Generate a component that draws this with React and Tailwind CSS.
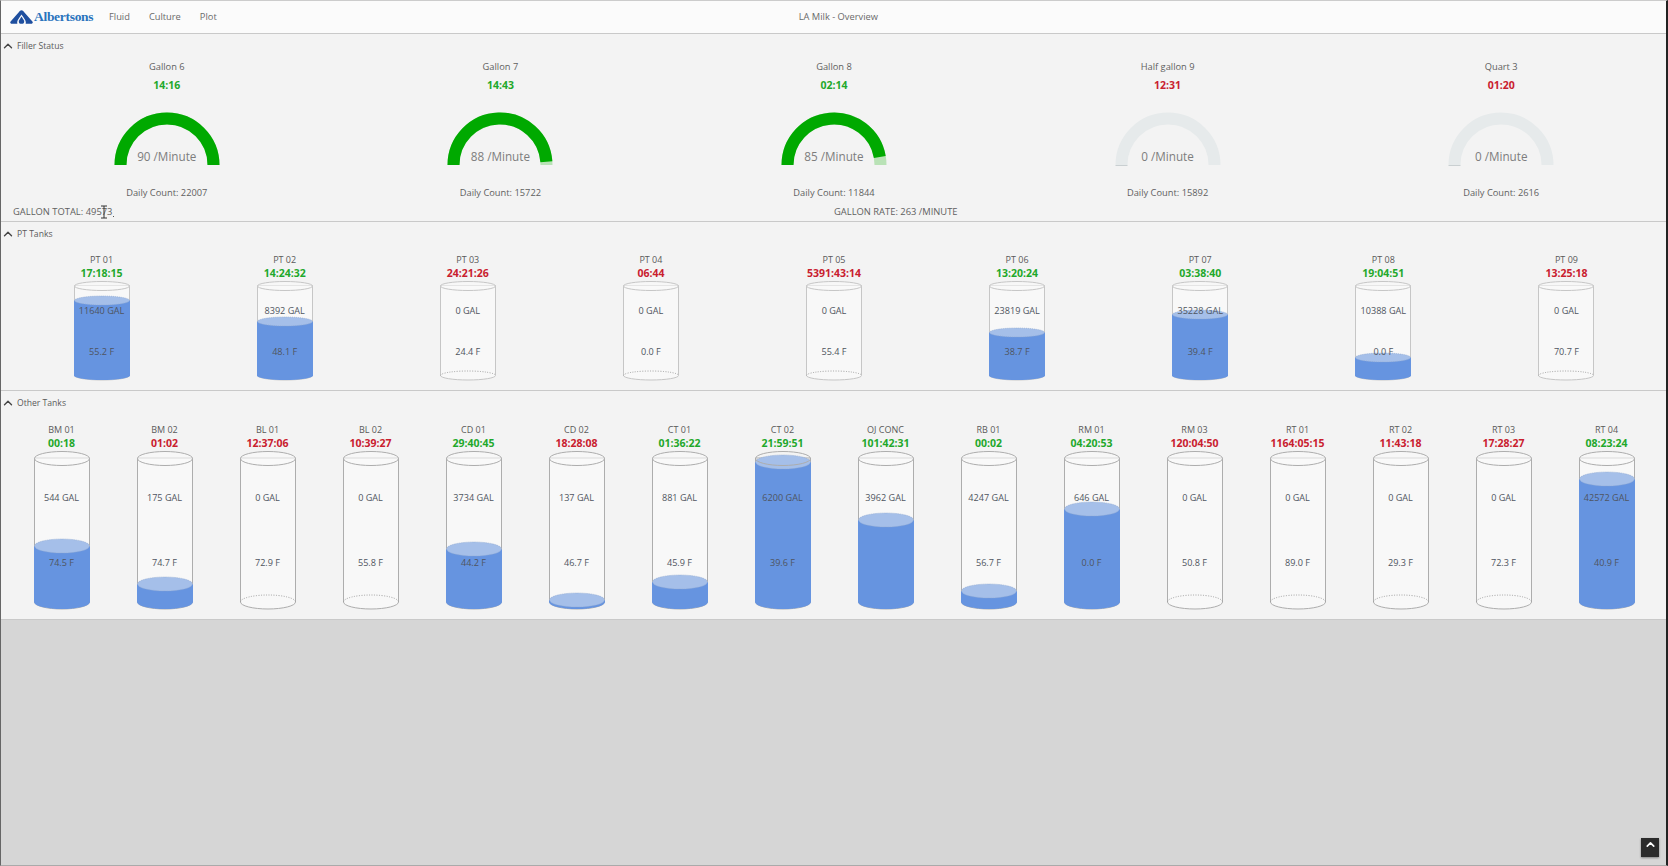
import React from "react";
import { ChevronUp } from "lucide-react";

const gauges = [
  { name: "Gallon 6", time: "14:16", ok: true, rate: 90, count: 22007 },
  { name: "Gallon 7", time: "14:43", ok: true, rate: 88, count: 15722 },
  { name: "Gallon 8", time: "02:14", ok: true, rate: 85, count: 11844 },
  { name: "Half gallon 9", time: "12:31", ok: false, rate: 0, count: 15892 },
  { name: "Quart 3", time: "01:20", ok: false, rate: 0, count: 2616 },
];

// level = px from tank top to the top of the liquid surface, null = empty
const ptTanks = [
  { name: "PT 01", time: "17:18:15", ok: true, gal: 11640, temp: "55.2", level: 15 },
  { name: "PT 02", time: "14:24:32", ok: true, gal: 8392, temp: "48.1", level: 36 },
  { name: "PT 03", time: "24:21:26", ok: false, gal: 0, temp: "24.4", level: null },
  { name: "PT 04", time: "06:44", ok: false, gal: 0, temp: "0.0", level: null },
  { name: "PT 05", time: "5391:43:14", ok: false, gal: 0, temp: "55.4", level: null },
  { name: "PT 06", time: "13:20:24", ok: true, gal: 23819, temp: "38.7", level: 47 },
  { name: "PT 07", time: "03:38:40", ok: true, gal: 35228, temp: "39.4", level: 29 },
  { name: "PT 08", time: "19:04:51", ok: true, gal: 10388, temp: "0.0", level: 72 },
  { name: "PT 09", time: "13:25:18", ok: false, gal: 0, temp: "70.7", level: null },
];

const otherTanks = [
  { name: "BM 01", time: "00:18", ok: true, gal: 544, temp: "74.5", level: 88 },
  { name: "BM 02", time: "01:02", ok: false, gal: 175, temp: "74.7", level: 126 },
  { name: "BL 01", time: "12:37:06", ok: false, gal: 0, temp: "72.9", level: null },
  { name: "BL 02", time: "10:39:27", ok: false, gal: 0, temp: "55.8", level: null },
  { name: "CD 01", time: "29:40:45", ok: true, gal: 3734, temp: "44.2", level: 91 },
  { name: "CD 02", time: "18:28:08", ok: false, gal: 137, temp: "46.7", level: 142 },
  { name: "CT 01", time: "01:36:22", ok: true, gal: 881, temp: "45.9", level: 124 },
  { name: "CT 02", time: "21:59:51", ok: true, gal: 6200, temp: "39.6", level: 4 },
  { name: "OJ CONC", time: "101:42:31", ok: true, gal: 3962, temp: "", level: 62 },
  { name: "RB 01", time: "00:02", ok: true, gal: 4247, temp: "56.7", level: 133 },
  { name: "RM 01", time: "04:20:53", ok: true, gal: 646, temp: "0.0", level: 51 },
  { name: "RM 03", time: "120:04:50", ok: false, gal: 0, temp: "50.8", level: null },
  { name: "RT 01", time: "1164:05:15", ok: false, gal: 0, temp: "89.0", level: null },
  { name: "RT 02", time: "11:43:18", ok: false, gal: 0, temp: "29.3", level: null },
  { name: "RT 03", time: "17:28:27", ok: false, gal: 0, temp: "72.3", level: null },
  { name: "RT 04", time: "08:23:24", ok: true, gal: 42572, temp: "40.9", level: 21 },
];

const Logo = () => (
  <div className="flex items-center ml-[10px] w-[85px]">
    <svg width="23" height="14" viewBox="0 0 23 14" className="shrink-0">
      <path
        d="M11.5 0.3C12.6 0.3 13.3 1 14 2L22.4 11.6C23.2 12.7 22.6 13.8 21.2 13.8H15.6C16.4 11.4 14.8 9.6 13.9 8.1L11.5 4.4L9.1 8.1C8.2 9.6 6.6 11.4 7.4 13.8H1.8C0.4 13.8 -0.2 12.7 0.6 11.6L9 2C9.7 1 10.4 0.3 11.5 0.3Z"
        fill="#1f4f9f"
      />
      <path d="M11.5 6.6L14 10.4C14.6 11.6 13.8 13.8 12.6 13.8H10.4C9.2 13.8 8.4 11.6 9 10.4Z" fill="#1f4f9f" />
    </svg>
    <span className="ml-[1px] font-['Liberation_Serif',serif] font-bold text-[13.5px] leading-none tracking-[-0.3px] text-[#2a74bd]">
      Albertsons
    </span>
  </div>
);

const TopBar = () => (
  <div className="h-[34px] flex items-center bg-[#fbfbfb] border-b border-[#c9c9c9] text-[#6a6a6a] text-[9.3px]">
    <Logo />
    <div className="flex items-center gap-[19px] ml-[14px]">
      <span>Fluid</span>
      <span>Culture</span>
      <span>Plot</span>
    </div>
    <span className="ml-[582px]">LA Milk - Overview</span>
  </div>
);

const SectionHead = ({ title }) => (
  <div className="h-[22px] pt-[2px] flex items-center text-[8.6px] text-[#5a5a5a]">
    <ChevronUp size={14} strokeWidth={2.4} className="ml-px text-[#444]" />
    <span className="ml-[2px]">{title}</span>
  </div>
);

const Gauge = ({ rate }) => {
  const frac = rate / 90;
  const x = 53 - 46.5 * Math.cos(Math.PI * frac);
  const y = 53 - 46.5 * Math.sin(Math.PI * frac);
  return (
    <div className="relative w-[106px] h-[54px]">
      <svg width="106" height="54" viewBox="0 0 106 54">
        <path d="M6.5 53A46.5 46.5 0 0 1 99.5 53" fill="none" strokeWidth="12" stroke={rate > 0 ? "#b9e2b6" : "#e6eaeb"} />
        {rate > 0 && <path d={`M6.5 53A46.5 46.5 0 0 1 ${x} ${y}`} fill="none" strokeWidth="12" stroke="#00a900" />}
        {rate === 0 && <path d="M0.5 53.5H12.5" stroke="#c9cfd1" strokeWidth="1" />}
      </svg>
      <div className="absolute inset-x-0 top-[35px] text-center text-[11.7px] leading-[18px] text-[#7d7d7d]">{rate} /Minute</div>
    </div>
  );
};

const Tank = ({ height, ry, level, gal, temp, stroke }) => {
  const surface = level === null ? null : level + ry;
  return (
    <div className="relative w-[56px]" style={{ height }}>
      <svg width="56" height={height} viewBox={`0 0 56 ${height}`} className="block">
        <path
          d={`M0.5 ${ry}V${height - ry - 1}A27.5 ${ry} 0 0 0 55.5 ${height - ry - 1}V${ry}Z`}
          fill="#f8f8f8"
          stroke={stroke}
        />
        {surface !== null && (
          <>
            <path d={`M0 ${surface}V${height - ry - 1}A28 ${ry} 0 0 0 56 ${height - ry - 1}V${surface}Z`} fill="#6694e0" />
            <ellipse cx="28" cy={surface} rx="27.5" ry={ry} fill="#a5bfe9" stroke="#8fa8cf" strokeWidth="0.7" strokeDasharray="1 1" />
          </>
        )}
        {surface === null && (
          <path
            d={`M0.5 ${height - ry - 1}A27.5 ${ry} 0 0 1 55.5 ${height - ry - 1}`}
            fill="none"
            stroke="#a0a0a0"
            strokeDasharray="1 1.5"
          />
        )}
        <ellipse cx="28" cy={ry + 0.5} rx="27.5" ry={ry} fill={surface !== null && level < 5 ? "none" : "#fafafa"} fillOpacity="0.6" stroke={stroke} />
      </svg>
      <div className="absolute inset-x-[-10px] top-[29.5%] -translate-y-1/2 text-center text-[9.1px] leading-[14px] text-[#4f5560]">{gal} GAL</div>
      {temp && (
        <div className="absolute inset-x-[-10px] top-[70.5%] -translate-y-1/2 text-center text-[9.1px] leading-[14px] text-[#4f5560]">{temp} F</div>
      )}
    </div>
  );
};

const TankColumn = ({ tank, height, ry, stroke }) => (
  <div className="flex flex-col items-center">
    <div className="h-[14px] leading-[14px] text-[9px] text-[#5a5a5a] whitespace-nowrap">{tank.name}</div>
    <div className={`h-[13px] leading-[13px] text-[10.5px] font-bold whitespace-nowrap ${tank.ok ? "text-[#1fa82b]" : "text-[#c9202e]"}`}>
      {tank.time}
    </div>
    <div className="mt-px">
      <Tank height={height} ry={ry} level={tank.level} gal={tank.gal} temp={tank.temp} stroke={stroke} />
    </div>
  </div>
);

export default function App() {
  return (
    <div className="relative h-[866px] w-[1668px] overflow-hidden flex flex-col bg-[#d6d6d6] font-['Open_Sans',sans-serif]">
      <TopBar />

      <section className="h-[188px] bg-[#f3f3f3] border-b border-[#c9c9c9]">
        <SectionHead title="Filler Status" />
        <div className="grid grid-cols-5">
          {gauges.map((g) => (
            <div key={g.name} className="flex flex-col items-center">
              <div className="mt-[3px] h-[14px] leading-[15px] text-[9.3px] text-[#5f5f5f]">{g.name}</div>
              <div className={`mt-[5px] h-[14px] leading-[14px] text-[10.5px] font-bold ${g.ok ? "text-[#1fa82b]" : "text-[#c9202e]"}`}>
                {g.time}
              </div>
              <div className="mt-[20px]">
                <Gauge rate={g.rate} />
              </div>
              <div className="mt-[20px] h-[14px] leading-[14px] text-[9.3px] text-[#5f5f5f]">Daily Count: {g.count}</div>
            </div>
          ))}
        </div>
        <div className="relative grid grid-cols-2 mt-[5px] h-[14px] leading-[14px] text-[9.4px] text-[#5f5f5f]">
          <span className="pl-[13px]">GALLON TOTAL: 49573</span>
          <span>GALLON RATE: 263 /MINUTE</span>
          {/* mouse cursor from the recording */}
          <svg width="16" height="14" viewBox="0 0 16 14" className="absolute left-[100px] top-0">
            <path d="M1 1H7M4 1V13M1 13H7" stroke="#333" strokeWidth="1" fill="none" />
            <rect x="13" y="11" width="1" height="1" fill="#555" />
          </svg>
        </div>
      </section>

      <section className="h-[169px] bg-[#f3f3f3] border-b border-[#c9c9c9]">
        <SectionHead title="PT Tanks" />
        <div className="grid grid-cols-9 px-[10px] mt-[9px]">
          {ptTanks.map((t) => (
            <TankColumn key={t.name} tank={t} height={100} ry={4.5} stroke="#c6c6c6" />
          ))}
        </div>
      </section>

      <section className="h-[229px] bg-[#f3f3f3] border-b border-[#c9c9c9]">
        <SectionHead title="Other Tanks" />
        <div className="grid grid-cols-16 px-[10px] mt-[10px]">
          {otherTanks.map((t) => (
            <TankColumn key={t.name} tank={t} height={159} ry={7} stroke="#adadad" />
          ))}
        </div>
      </section>

      <div className="flex-1" />

      <button className="absolute right-[9px] bottom-[9px] w-[18px] h-[19px] flex justify-center bg-[#2b2b2b] shadow-[0_1px_2px_rgba(0,0,0,0.4)]">
        <ChevronUp size={13} strokeWidth={3} className="text-white" />
      </button>
      <div className="pointer-events-none absolute inset-0 border-l border-r-2 border-t border-b border-l-[#666] border-r-[#222] border-t-[#ccc] border-b-[#aaa]" />
    </div>
  );
}
